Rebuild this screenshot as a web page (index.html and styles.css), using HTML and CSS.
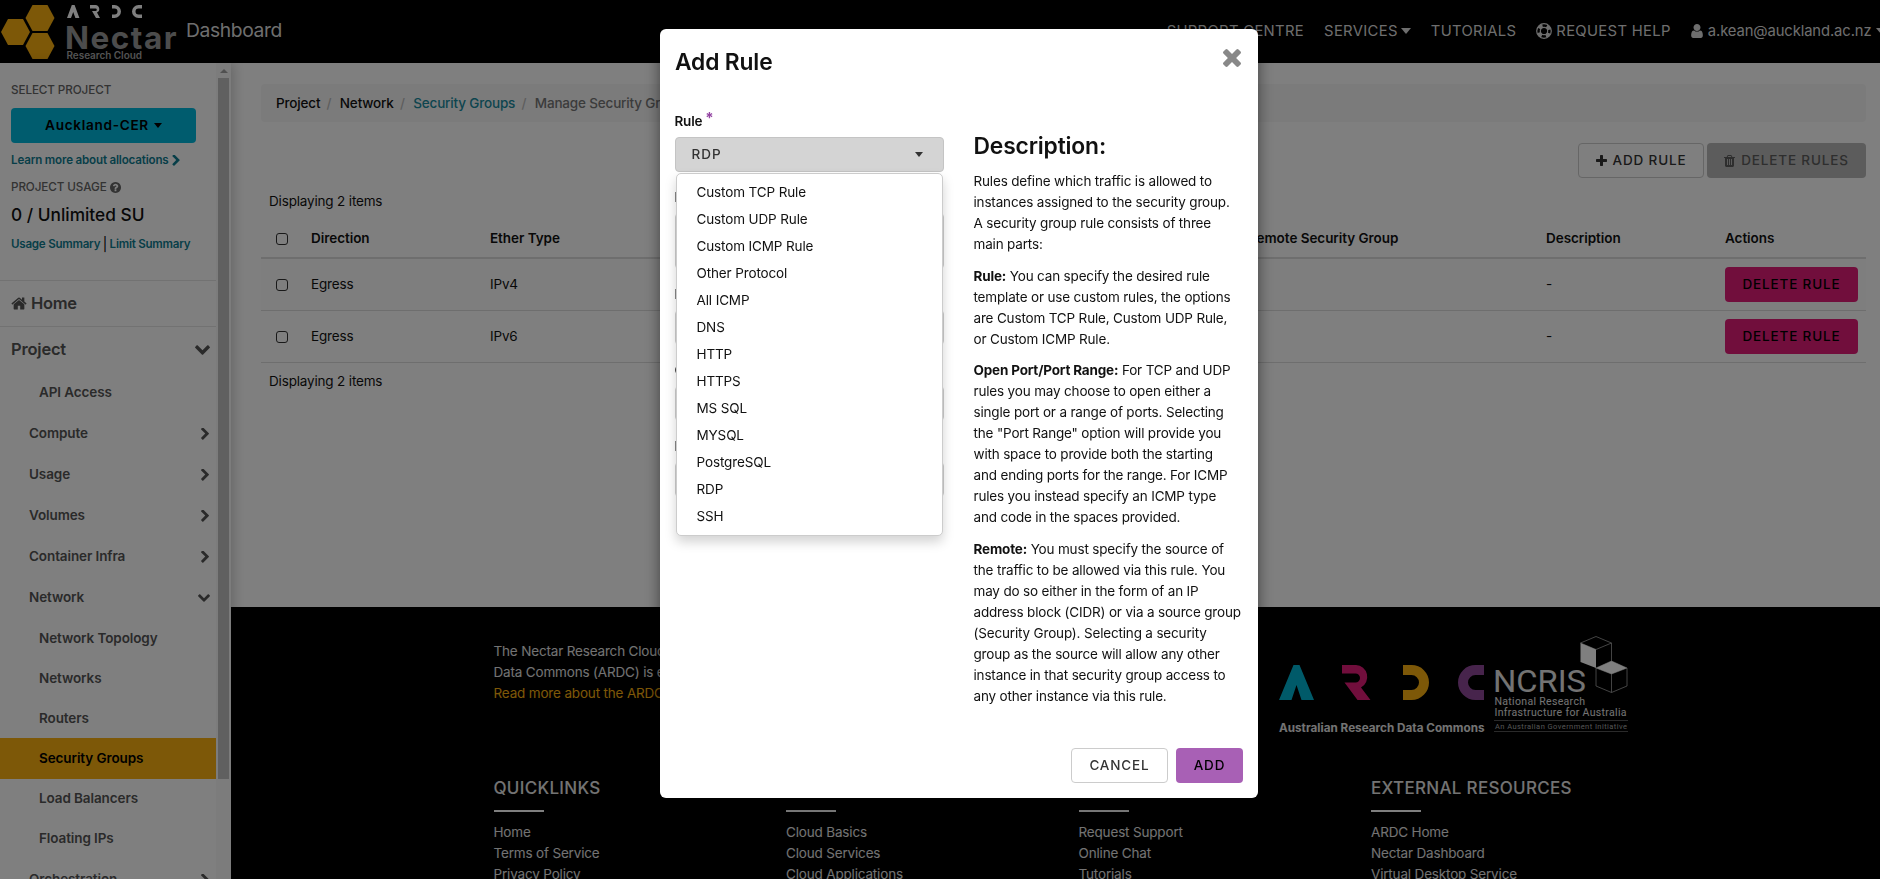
FILE: index.html
```html
<!DOCTYPE html>
<html lang="en">
<head>
<meta charset="utf-8">
<title>Manage Security Group Rules - Nectar Dashboard</title>
<link rel="stylesheet" href="styles.css">
</head>
<body>
<svg class="defs" width="0" height="0" aria-hidden="true">
  <symbol id="i-home" viewBox="64 200 1664 1400"><path d="M1472 992v480q0 26-19 45t-45 19h-384v-384h-256v384h-384q-26 0-45-19t-19-45v-480q0-1 .5-3t.5-3l575-474 575 474q1 2 1 6zm223-69l-62 74q-8 9-21 11h-3q-13 0-21-7l-692-577-692 577q-12 8-24 7-13-2-21-11l-62-74q-8-10-7-23.5t11-21.5l719-599q32-26 76-26t76 26l244 204v-195q0-14 9-23t23-9h192q14 0 23 9t9 23v408l219 182q10 8 11 21.5t-7 23.5z"/></symbol>
  <symbol id="i-question" viewBox="128 128 1536 1536"><path d="M1024 1376v-192q0-14-9-23t-23-9h-192q-14 0-23 9t-9 23v192q0 14 9 23t23 9h192q14 0 23-9t9-23zm256-672q0-88-55.5-163t-138.5-116-170-41q-243 0-371 213-15 24 8 42l132 100q7 6 19 6 16 0 25-12 53-68 86-92 34-24 86-24 48 0 85.5 26t37.5 59q0 38-20 61t-68 45q-63 28-115.5 86.5t-52.5 125.5v36q0 14 9 23t23 9h192q14 0 23-9t9-23q0-19 21.5-49.5t54.5-49.5q32-18 49-28.5t46-35 44.5-48 28-60.5 12.5-81zm384 192q0 209-103 385.5t-279.5 279.5-385.5 103-385.5-103-279.5-279.5-103-385.5 103-385.5 279.5-279.5 385.5-103 385.5 103 279.5 279.5 103 385.5z"/></symbol>
  <symbol id="i-right" viewBox="346 120 1036 1536"><path d="M1363 877l-742 742q-19 19-45 19t-45-19l-166-166q-19-19-19-45t19-45l531-531-531-531q-19-19-19-45t19-45l166-166q19-19 45-19t45 19l742 742q19 19 19 45t-19 45z"/></symbol>
  <symbol id="i-down" viewBox="90 530 1612 1040"><path d="M1683 808l-742 741q-19 19-45 19t-45-19l-742-741q-19-19-19-45.500t19-45.500l166-165q19-19 45-19t45 19l531 531 531-531q19-19 45-19t45 19l166 165q19 19 19 45.500t-19 45.500z"/></symbol>
  <symbol id="i-plus" viewBox="192 128 1408 1408"><path d="M1600 736v192q0 40-28 68t-68 28h-416v416q0 40-28 68t-68 28h-192q-40 0-68-28t-28-68v-416h-416q-40 0-68-28t-28-68v-192q0-40 28-68t68-28h416v-416q0-40 28-68t68-28h192q40 0 68 28t28 68v416h416q40 0 68 28t28 68z"/></symbol>
  <symbol id="i-trash" viewBox="192 128 1408 1536"><path d="M704 1376v-704q0-14-9-23t-23-9h-64q-14 0-23 9t-9 23v704q0 14 9 23t23 9h64q14 0 23-9t9-23zm256 0v-704q0-14-9-23t-23-9h-64q-14 0-23 9t-9 23v704q0 14 9 23t23 9h64q14 0 23-9t9-23zm256 0v-704q0-14-9-23t-23-9h-64q-14 0-23 9t-9 23v704q0 14 9 23t23 9h64q14 0 23-9t9-23zm-544-992h448l-48-117q-7-9-17-11h-317q-10 2-17 11zm928 32v64q0 14-9 23t-23 9h-96v948q0 83-47 143.500t-113 60.500h-832q-66 0-113-58.500t-47-141.500v-952h-96q-14 0-23-9t-9-23v-64q0-14 9-23t23-9h309l70-167q15-37 54-63t79-26h320q40 0 79 26t54 63l70 167h309q14 0 23 9t9 23z"/></symbol>
  <symbol id="i-times" viewBox="302 366 1188 1188"><path d="M1490 1322q0 40-28 68l-136 136q-28 28-68 28t-68-28l-294-294-294 294q-28 28-68 28t-68-28l-136-136q-28-28-28-68t28-68l294-294-294-294q-28-28-28-68t28-68l136-136q28-28 68-28t68 28l294 294 294-294q28-28 68-28t68 28l136 136q28 28 28 68t-28 68l-294 294 294 294q28 28 28 68z"/></symbol>
  <symbol id="i-user" viewBox="256 128 1280 1536"><path d="M1536 1399q0 109-62.500 187t-150.500 78h-854q-88 0-150.500-78t-62.500-187q0-85 8.500-160.500t31.500-152 58.500-131 94-89 134.500-34.500q131 128 313 128t313-128q76 0 134.500 34.500t94 89 58.500 131 31.500 152 8.500 160.500zm-256-887q0 159-112.500 271.500t-271.500 112.500-271.500-112.500-112.500-271.500 112.500-271.500 271.500-112.500 271.500 112.500 112.500 271.500z"/></symbol>
  <symbol id="i-ring" viewBox="0 0 16 16"><g fill="none" stroke="currentColor"><circle cx="8" cy="8" r="7.300" stroke-width="1.200"/><circle cx="8" cy="8" r="3.700" stroke-width="1.200"/><circle cx="8" cy="8" r="5.500" stroke-width="3.600" stroke-dasharray="4.300 4.340" stroke-dashoffset="-2.170"/></g></symbol>
</svg>

<header class="topbar">
  <svg class="logo" width="180" height="63" viewBox="0 0 180 63">
    <g fill="#fab010">
      <path d="M8 19h15l7 13-7 13H8L1 32z"/>
      <path d="M32.500 5h15l7 13-7 13h-15l-7-13z"/>
      <path d="M32.500 33h15l7 13-7 13h-15l-7-13z"/>
    </g>
    <g fill="#fff">
      <path d="M67 18l4.800-13h2.800l4.800 13h-4l-2.200-6-2.200 6z"/>
      <path d="M90 5h5.500a4 4 0 0 1 1.500 7.600l3 5.400h-4l-4-7h3.500a1.300 1.300 0 0 0 0-2.600H90z"/>
      <path d="M112 5h2.500a6.500 6.500 0 0 1 0 13H112v-3.500h2.500a3 3 0 0 0 0-6H112z"/>
      <path d="M142 5h-3.500a6.500 6.500 0 0 0 0 13h3.500v-3.500h-3.500a3 3 0 0 1 0-6h3.500z"/>
    </g>
    <text class="logo-name" x="65" y="48.500" textLength="111.500">Nectar</text>
    <text class="logo-sub" x="66.500" y="59" textLength="75.500">Research Cloud</text>
  </svg>
  <span class="brand">Dashboard</span>
  <nav class="topnav">
    <a>SUPPORT CENTRE</a>
    <a>SERVICES<i class="caret"></i></a>
    <a>TUTORIALS</a>
    <a><svg class="ic-ring"><use href="#i-ring"/></svg>REQUEST HELP</a>
    <a class="account"><svg class="ic-user"><use href="#i-user"/></svg>a.kean@auckland.ac.nz<i class="caret"></i></a>
  </nav>
</header>

<div class="shell">
  <aside class="sidebar">
    <div class="side-body">
      <section class="project-box">
        <div class="cap">SELECT PROJECT</div>
        <button class="project-btn">Auckland-CER<i class="caret"></i></button>
        <a class="small-link learn">Learn more about allocations<svg class="ic-learn"><use href="#i-right"/></svg></a>
        <div class="cap">PROJECT USAGE<svg class="ic-q"><use href="#i-question"/></svg></div>
        <div class="usage">0 / Unlimited SU</div>
        <div class="summary"><a class="small-link">Usage Summary</a><span>|</span><a class="small-link">Limit Summary</a></div>
      </section>
      <a class="side-home"><svg class="ic-home"><use href="#i-home"/></svg>Home</a>
      <a class="side-top">Project<svg class="ic-down-lg"><use href="#i-down"/></svg></a>
      <a class="leaf">API Access</a>
      <a class="group">Compute<svg class="ic-right"><use href="#i-right"/></svg></a>
      <a class="group">Usage<svg class="ic-right"><use href="#i-right"/></svg></a>
      <a class="group">Volumes<svg class="ic-right"><use href="#i-right"/></svg></a>
      <a class="group">Container Infra<svg class="ic-right"><use href="#i-right"/></svg></a>
      <a class="group">Network<svg class="ic-down"><use href="#i-down"/></svg></a>
      <div class="leaves">
        <a class="leaf">Network Topology</a>
        <a class="leaf">Networks</a>
        <a class="leaf">Routers</a>
        <a class="leaf active">Security Groups</a>
        <a class="leaf">Load Balancers</a>
        <a class="leaf">Floating IPs</a>
      </div>
      <a class="group">Orchestration<svg class="ic-right"><use href="#i-right"/></svg></a>
    </div>
    <div class="scroll"><i class="scroll-up"></i><i class="thumb"></i></div>
  </aside>

  <div class="main">
    <main class="content">
      <ol class="crumbs"><li>Project</li><li>Network</li><li><a>Security Groups</a></li><li class="here">Manage Security Group Rules: default</li></ol>
      <div class="tools">
        <button class="btn outline"><svg class="ic-plus"><use href="#i-plus"/></svg>ADD RULE</button>
        <button class="btn muted"><svg class="ic-trash"><use href="#i-trash"/></svg>DELETE RULES</button>
      </div>
      <div class="count">Displaying 2 items</div>
      <div class="row head"><i class="check"></i><span>Direction</span><span>Ether Type</span><span>IP Protocol</span><span>Port Range</span><span>Remote IP Prefix</span><span>Remote Security Group</span><span>Description</span><span>Actions</span></div>
      <div class="row odd"><i class="check"></i><span>Egress</span><span>IPv4</span><span>Any</span><span>Any</span><span>0.0.0.0/0</span><span></span><span>-</span><button class="btn danger">DELETE RULE</button></div>
      <div class="row"><i class="check"></i><span>Egress</span><span>IPv6</span><span>Any</span><span>Any</span><span>::/0</span><span></span><span>-</span><button class="btn danger">DELETE RULE</button></div>
      <div class="count after">Displaying 2 items</div>
    </main>
    <footer class="footer">
      <div class="about">
        <p>The Nectar Research Cloud by the Australian Research<br>Data Commons (ARDC) is enabled by NCRIS.<br><a>Read more about the ARDC</a></p>
        <svg class="partners" width="360" height="104" viewBox="1275 632 360 104">
          <path fill="#00b5d3" d="M1279 700l14.500-35h6l14.500 35h-12.500l-5-15-5 15z"/>
          <path fill="#e31c79" d="M1342 665h14a12 12 0 0 1 5 22.500l9.500 12.500h-13l-13-17.500h11a4 4 0 0 0 0-9H1342z"/>
          <path fill="#fab010" d="M1403 665h8.500a17.500 17.500 0 0 1 0 35h-8.500v-10h8.500a7.500 7.500 0 0 0 0-15h-8.500z"/>
          <path fill="#8f4899" d="M1484 665h-8.500a17.500 17.500 0 0 0 0 35h8.500v-10h-8.500a7.500 7.500 0 0 1 0-15h8.500z"/>
          <text class="p-ardc" x="1279" y="732" textLength="205.500">Australian Research Data Commons</text>
          <text class="p-ncris" x="1493" y="691.500" textLength="93" lengthAdjust="spacingAndGlyphs">NCRIS</text>
          <text class="p-sub" x="1494.500" y="704.500" textLength="90.500">National Research</text>
          <text class="p-sub" x="1494.500" y="715.500" textLength="132">Infrastructure for Australia</text>
          <text class="p-tiny" x="1495" y="729" textLength="132">An Australian Government Initiative</text>
          <path stroke="#555" fill="none" d="M1494 720.500h134M1494 731.500h134"/>
          <g stroke="#aaa" stroke-width=".8" fill="none"><path d="M1580.500 643l15.500-6.500 15.500 6.500-15.500 6.500zM1611.500 643v18M1596 668v18l15.500 6.500 15.500-6.500v-18M1611.500 674v18.500M1596 668l15.500-7 15.500 7-15.500 6z"/></g>
          <path fill="#fff" d="M1580.500 643l15.500 6.500V668l-15.500-6zM1596 668l15.500-7 15.500 7-15.500 6z"/>
        </svg>
      </div>
      <div class="links">
        <div><h4>QUICKLINKS</h4><a>Home</a><a>Terms of Service</a><a>Privacy Policy</a></div>
        <div><h4>LEARN</h4><a>Cloud Basics</a><a>Cloud Services</a><a>Cloud Applications</a></div>
        <div><h4>SUPPORT</h4><a>Request Support</a><a>Online Chat</a><a>Tutorials</a></div>
        <div><h4>EXTERNAL RESOURCES</h4><a>ARDC Home</a><a>Nectar Dashboard</a><a>Virtual Desktop Service</a></div>
      </div>
    </footer>
  </div>
</div>

<div class="backdrop">
  <div class="modal">
    <div class="modal-head"><h3>Add Rule</h3><svg class="ic-close"><use href="#i-times"/></svg></div>
    <div class="modal-body">
      <form class="form">
        <label>Rule<b class="req">*</b></label>
        <div class="select"><span>RDP</span><i class="caret"></i>
          <ul class="menu">
            <li>Custom TCP Rule</li><li>Custom UDP Rule</li><li>Custom ICMP Rule</li><li>Other Protocol</li><li>All ICMP</li><li>DNS</li><li>HTTP</li><li>HTTPS</li><li>MS SQL</li><li>MYSQL</li><li>PostgreSQL</li><li>RDP</li><li>SSH</li>
          </ul>
        </div>
        <label>Description</label><div class="field tall"></div>
        <label>Remote</label><div class="field"></div>
        <label>CIDR</label><div class="field"></div>
        <label>Port</label><div class="field"></div>
      </form>
      <div class="help">
        <h3>Description:</h3>
        <p>Rules define which traffic is allowed to<br>instances assigned to the security group.<br>A security group rule consists of three<br>main parts:</p>
        <p><b>Rule:</b> You can specify the desired rule<br>template or use custom rules, the options<br>are Custom TCP Rule, Custom UDP Rule,<br>or Custom ICMP Rule.</p>
        <p><b>Open Port/Port Range:</b> For TCP and UDP<br>rules you may choose to open either a<br>single port or a range of ports. Selecting<br>the "Port Range" option will provide you<br>with space to provide both the starting<br>and ending ports for the range. For ICMP<br>rules you instead specify an ICMP type<br>and code in the spaces provided.</p>
        <p><b>Remote:</b> You must specify the source of<br>the traffic to be allowed via this rule. You<br>may do so either in the form of an IP<br>address block (CIDR) or via a source group<br>(Security Group). Selecting a security<br>group as the source will allow any other<br>instance in that security group access to<br>any other instance via this rule.</p>
      </div>
    </div>
    <div class="modal-foot"><button class="btn outline cancel">CANCEL</button><button class="btn primary">ADD</button></div>
  </div>
</div>
</body>
</html>
```
FILE: styles.css
```css
* { box-sizing: border-box; }
body {
  margin: 0;
  height: 879px;
  overflow: hidden;
  background: #fff;
  color: #111;
  font: 13.5px/21px Inter, "Liberation Sans", sans-serif;
  letter-spacing: -0.17px;
}
h3, h4, p, ul, ol { margin: 0; padding: 0; font-weight: 500; list-style: none; }
p { font-weight: 400; }
svg { fill: currentColor; flex: none; }
button { font: inherit; color: inherit; border: 0; padding: 0; white-space: nowrap; }
.defs { position: absolute; }
.caret { display: inline-block; border: 5px solid transparent; border-top-color: currentColor; border-bottom: 0; }

/* Top bar */
.topbar { height: 63px; background: #000; display: flex; align-items: center; overflow: hidden; }
.logo { flex: none; }
.logo-name { font: 700 31.5px Inter, sans-serif; fill: #999; letter-spacing: 0; }
.logo-sub { font: 600 10px Inter, sans-serif; fill: #aaa; letter-spacing: 0; }
.brand { color: #ddd; font-size: 19.3px; letter-spacing: -0.38px; margin-left: 6px; padding-bottom: 2px; }
.topnav { flex: 1; display: flex; justify-content: flex-end; gap: 20px; margin-right: -6px; padding-bottom: 1px; color: #ddd; font-size: 14.8px; letter-spacing: 0.33px; }
.topnav a { display: flex; align-items: center; flex: none; white-space: nowrap; }
.topnav .caret { margin-left: 3px; border-width: 6px 5.5px 0; }
.topnav .account { letter-spacing: -0.11px; }
.account .caret { margin-left: 4.5px; }
.ic-ring { width: 16px; height: 16px; margin-right: 4px; }
.ic-user { width: 12px; height: 14px; margin-right: 5px; }

/* Sidebar */
.shell { display: flex; height: 816px; }
.sidebar { width: 231px; flex: none; display: flex; overflow: hidden; box-shadow: 2px 0 12px rgba(0, 0, 0, .22); position: relative; }
.side-body { width: 216px; color: #555; font-weight: 600; }
.project-box { height: 218px; padding: 16px 11px 0; border-bottom: 1px solid #e4e4e4; }
.cap { font-size: 11.7px; font-weight: 500; letter-spacing: -0.1px; line-height: 22px; color: #666; display: flex; align-items: center; }
.project-btn { display: flex; align-items: center; justify-content: center; width: 185px; height: 35px; margin: 7px 0 6px; border-radius: 4px; background: #00b8dc; color: #000; font-size: 13.6px; font-weight: 600; letter-spacing: 0.7px; }
.project-btn .caret { margin-left: 5px; border-width: 5px 4.5px 0; }
.small-link { font-size: 11.6px; letter-spacing: -0.18px; color: #0f7d91; }
.learn { display: flex; align-items: center; height: 22px; margin-bottom: 5px; }
.ic-learn { width: 8px; height: 11px; margin-left: 3px; }
.ic-q { width: 11px; height: 11px; margin-left: 3px; }
.usage { font-size: 17.3px; font-weight: 500; letter-spacing: 0; color: #111; height: 34px; line-height: 34px; }
.summary { display: flex; gap: 2.5px; margin-top: 1px; color: #000; font-weight: 400; line-height: 22px; }
.summary .small-link { font-weight: 600; letter-spacing: -0.24px; }
.side-home { display: flex; align-items: center; gap: 4px; height: 46px; padding-left: 11px; border-bottom: 1px solid #e4e4e4; font-size: 16.5px; letter-spacing: -0.3px; }
.ic-home { width: 16px; height: 13px; }
.side-top { display: flex; align-items: center; justify-content: space-between; height: 45px; padding: 0 6px 0 11px; font-size: 16.5px; letter-spacing: -0.2px; }
.leaf, .group { display: flex; align-items: center; height: 41px; letter-spacing: -0.1px; }
.leaf { padding-left: 39px; }
.leaf + .leaf { margin-top: -1px; }
.leaf.active { background: #fab010; color: #000; }
.group { justify-content: space-between; padding: 0 7px 0 29px; }
.ic-right { width: 8px; height: 12px; }
.ic-down { width: 12px; height: 8px; margin-right: -1px; }
.ic-down-lg { width: 15px; height: 10px; }
.scroll { width: 15px; background: #f8f8f8; display: flex; flex-direction: column; align-items: center; }
.scroll-up { border: 4px solid transparent; border-bottom-color: #a0a0a0; border-top: 0; margin: 6px 0 5px; }
.thumb { width: 11px; height: 701px; background: #c1c1c1; }

/* Main column */
.main { flex: 1; min-width: 0; display: flex; flex-direction: column; }
.content { height: 544px; flex: none; padding: 21px 14px 0 30px; }
.crumbs { display: flex; height: 38px; align-items: center; padding-left: 15px; border-radius: 4px; background: #f7f7f7; }
.crumbs li + li::before { content: "/"; color: #bbb; padding: 0 8.5px 0 6.2px; }
.crumbs a { color: #1a8a9e; }
.crumbs .here { color: #777; }
.tools { display: flex; justify-content: flex-end; gap: 3px; margin-top: 21px; }
.btn { display: flex; align-items: center; justify-content: center; height: 35px; border-radius: 4px; font-weight: 550; letter-spacing: 0.85px; }
.outline { background: #fff; border: 1px solid #ccc; color: #333; }
.tools .outline { width: 126px; }
.muted { width: 159px; background: #b8b8b8; color: #5c5c5c; }
.danger { width: 133px; background: #e31c79; color: #000; }
.primary { width: 67px; background: #a860b5; color: #000; }
.ic-plus { width: 11px; height: 11px; margin-right: 6px; }
.ic-trash { width: 11px; height: 12px; margin-right: 6px; }
.count { padding-left: 8px; margin-top: 13px; height: 21px; letter-spacing: -0.17px; }
.row { display: grid; grid-template-columns: 35px 179px repeat(4, 189.5px) 298px 179px 133px; align-items: center; height: 52px; padding-left: 15px; border-bottom: 1px solid #ddd; }
.head { height: 47px; padding-top: 7px; border-bottom: 2px solid #ddd; font-weight: 600; letter-spacing: -0.05px; }
.odd { background: #fcfcfc; }
.check { width: 12px; height: 12px; border: 1px solid #333; border-radius: 3px; margin-top: 1px; }
.after { margin-top: 8px; }

/* Footer */
.footer { flex: 1; background: #000; color: #e6e6e6; padding: 34px 0 0 262.5px; overflow: hidden; }
.about { display: flex; height: 129px; }
.about p { width: 781.5px; }
.about a { color: #fab010; }
.partners { margin-top: -9px; }
.p-ardc { font: 700 11.7px Inter, sans-serif; letter-spacing: 0; }
.p-ncris { font: 400 31px Roboto, sans-serif; letter-spacing: 0; }
.p-sub { font: 400 10.5px Roboto, sans-serif; letter-spacing: 0; }
.p-tiny { font: 400 7.5px Roboto, sans-serif; fill: #aaa; letter-spacing: 0; }
.links { display: grid; grid-template-columns: repeat(4, 292.5px); }
.links h4 { font-size: 17px; font-weight: 550; letter-spacing: 0.3px; height: 40px; line-height: 36px; }
.links h4::after { content: ""; display: block; width: 50px; height: 2px; background: #fff; margin-top: 4px; }
.links h4 + a { margin-top: 12px; }
.links a { display: block; }

/* Dialog */
.backdrop { position: fixed; inset: 0; background: rgba(0, 0, 0, .5); }
.modal { width: 598px; height: 769px; margin: 29px 0 0 660px; background: #fff; border-radius: 6px; box-shadow: 0 5px 15px rgba(0, 0, 0, .5); padding: 15px; display: flex; flex-direction: column; color: #111; }
.modal-head { display: flex; justify-content: space-between; height: 68px; flex: none; }
.modal h3 { font-size: 22.8px; font-weight: 580; letter-spacing: -0.15px; line-height: 34px; }
.modal-head h3 { padding-top: 1px; }
.ic-close { width: 18px; height: 18px; margin: 4.5px 2px 0 0; color: #888; }
.modal-body { display: flex; flex: 1; }
.form { width: 269px; flex: none; margin-right: 29.5px; }
.form label { display: flex; font-weight: 600; letter-spacing: -0.2px; height: 25px; line-height: 18px; margin-left: -0.5px; }
.req { color: #9445a3; font-size: 15px; line-height: 12px; margin-left: 3px; font-weight: 700; }
.select { position: relative; display: flex; align-items: center; justify-content: space-between; height: 35px; margin-bottom: 16px; padding: 0 20px 0 15.5px; border: 1px solid #c4c4c4; border-radius: 4px; background: #d4d4d4; color: #333; font-weight: 550; letter-spacing: 1px; }
.select .caret { border-width: 5px 4.5px 0; }
.menu { position: absolute; left: 0; top: 35px; width: 267px; height: 363px; padding: 5px 0; background: #fff; border: 1px solid #ccc; border-radius: 5px; box-shadow: 0 6px 12px rgba(0, 0, 0, .175); color: #111; font-weight: 400; letter-spacing: -0.13px; }
.menu li { height: 27px; line-height: 27px; padding-left: 19.5px; }
.field { height: 35px; margin-bottom: 16px; border: 1px solid #ccc; border-radius: 4px; }
.tall { height: 56px; }
.help h3 { margin: 17px 0 8px; letter-spacing: -0.15px; }
.help p { margin-bottom: 10.5px; white-space: nowrap; }
.help p b { font-weight: 700; }
.modal-foot { display: flex; justify-content: flex-end; gap: 8px; }
.cancel { width: 97px; }
```
